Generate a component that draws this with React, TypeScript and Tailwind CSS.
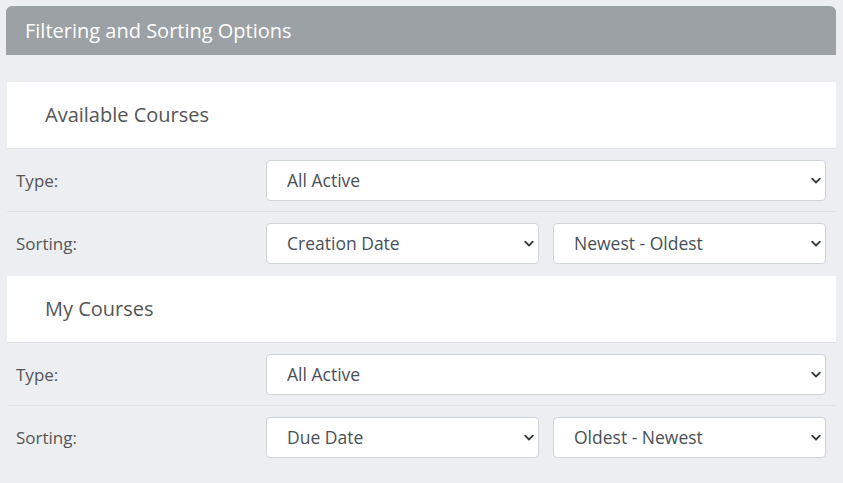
import React from 'react'

const Chevron = () => (
    <svg className="pointer-events-none absolute right-[5px] top-1/2 -translate-y-1/2" width="10" height="7" viewBox="0 0 10 7">
        <path d="M1.2 1.2 L5 5 L8.8 1.2" fill="none" stroke="#343a40" strokeWidth="1.8" strokeLinecap="round" strokeLinejoin="round" />
    </svg>
)

const Select = ({ value, options }: { value: string; options: string[] }) => (
    <div className="relative flex-1">
        <select
            defaultValue={value}
            className="block h-[41px] w-full appearance-none rounded-[4px] border border-[#ced4da] bg-white pl-5 pr-6 text-[17.5px] text-[#495057] outline-none"
        >
            {options.map((o) => (
                <option key={o}>{o}</option>
            ))}
        </select>
        <Chevron />
    </div>
)

const Section = ({ title, sortBy, order }: { title: string; sortBy: string; order: string }) => (
    <div>
        <div className="flex h-[67px] items-center border-b border-[#dee2e6] bg-white pl-[38px] text-[20px] text-[#555]">
            {title}
        </div>
        <div className="flex items-center border-b border-[#dee2e6] pt-[11px] pb-[10px] pr-[10px]">
            <div className="w-[259px] pl-[9px] text-[17px] text-[#555]">Type:</div>
            <div className="flex flex-1 gap-[14px]">
                <Select value="All Active" options={['All Active', 'All', 'Archived']} />
            </div>
        </div>
        <div className="flex items-center pt-[11px] pb-[12px] pr-[10px]">
            <div className="w-[259px] pl-[9px] text-[17px] text-[#555]">Sorting:</div>
            <div className="flex flex-1 gap-[14px]">
                <Select value={sortBy} options={['Creation Date', 'Due Date', 'Title']} />
                <Select value={order} options={['Newest - Oldest', 'Oldest - Newest']} />
            </div>
        </div>
    </div>
)

export default function App() {
    return (
        <div className="min-h-[483px] w-[843px] bg-[#eceef2] pt-[6px] font-['Open_Sans',sans-serif]">
            <div className="ml-[6px] w-[830px]">
                <div className="flex h-[49px] items-center rounded-t-[6px] bg-[#9ba1a5] pl-[19px] text-[20px] font-medium text-white">
                    Filtering and Sorting Options
                </div>
                <div className="mt-[27px] pl-px">
                    <Section title="Available Courses" sortBy="Creation Date" order="Newest - Oldest" />
                    <Section title="My Courses" sortBy="Due Date" order="Oldest - Newest" />
                </div>
            </div>
        </div>
    )
}
